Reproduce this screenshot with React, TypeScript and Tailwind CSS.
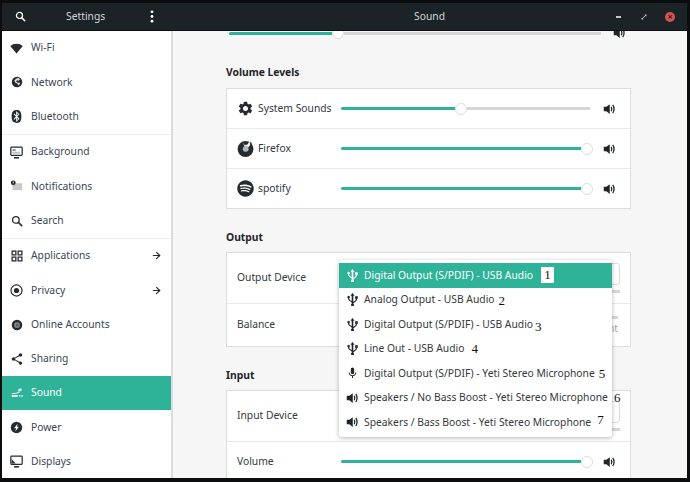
import { ArrowRight } from 'lucide-react';
import { FaBluetooth, FaSpotify } from 'react-icons/fa';
import { MdMic, MdSettings, MdShare } from 'react-icons/md';

type IconProps = { className?: string };

const SearchIcon = ({ className = '' }: IconProps) => (
  <svg viewBox="0 0 16 16" className={className} fill="none" stroke="currentColor" strokeWidth="1.8">
    <circle cx="6.5" cy="6.5" r="4.4" />
    <path d="M10 10l4.2 4.2" strokeWidth="2.2" strokeLinecap="round" />
  </svg>
);

const WifiIcon = ({ className = '' }: IconProps) => (
  <svg viewBox="0 0 16 16" className={className} fill="currentColor">
    <path d="M8 14L.5 5.2C2.5 3.2 5 2.2 8 2.2s5.500 1 7.500 3z" />
  </svg>
);

const GlobeIcon = ({ className = '' }: IconProps) => (
  <svg viewBox="0 0 16 16" className={className}>
    <circle cx="8" cy="8" r="7" fill="currentColor" />
    <path d="M7 3.200l3.500-.6 1.500 2-2 1.800-2-.6-1.200 1.500 2.200 1.700 2.500-.2.500 1.800-2.500 2.200-1-2.700-3-1.500-1-2.500z" fill="#fff" opacity=".85" />
  </svg>
);

const MonitorIcon = ({ className = '' }: IconProps) => (
  <svg viewBox="0 0 16 16" className={className} fill="none" stroke="currentColor">
    <rect x="1" y="1.500" width="14" height="10" rx="1" strokeWidth="1.500" />
    <path d="M5 14.500h6" strokeWidth="2" />
    <path d="M3 4h4v2H3z" fill="currentColor" stroke="none" opacity=".6" />
    <path d="M3 7h9v2.500H3z" fill="currentColor" stroke="none" opacity=".3" />
  </svg>
);

const DisplayIcon = ({ className = '' }: IconProps) => (
  <svg viewBox="0 0 16 16" className={className} fill="none" stroke="currentColor">
    <rect x="1" y="1.500" width="14" height="10" rx="1" strokeWidth="1.500" />
    <path d="M5 14.500h6" strokeWidth="2" />
    <path d="M2 5l5 5.500H2z" fill="currentColor" stroke="none" />
  </svg>
);

const NotificationIcon = ({ className = '' }: IconProps) => (
  <svg viewBox="0 0 16 16" className={className}>
    <path d="M3 4h12v8.500H3z" fill="#c9c9c9" />
    <circle cx="4" cy="3.500" r="3" fill="currentColor" />
    <path d="M4 1.800v2M4 4.600v.6" stroke="#fff" strokeWidth="1" />
  </svg>
);

const AppsIcon = ({ className = '' }: IconProps) => (
  <svg viewBox="0 0 16 16" className={className} fill="none" stroke="currentColor" strokeWidth="1.700">
    <rect x="1.500" y="1.500" width="5" height="5" />
    <rect x="9.500" y="1.500" width="5" height="5" />
    <rect x="1.500" y="9.500" width="5" height="5" />
    <rect x="9.500" y="9.500" width="5" height="5" />
  </svg>
);

const PrivacyIcon = ({ className = '' }: IconProps) => (
  <svg viewBox="0 0 16 16" className={className}>
    <circle cx="8" cy="8" r="6.800" fill="none" stroke="currentColor" strokeWidth="1.500" />
    <circle cx="8" cy="8" r="3.200" fill="currentColor" />
  </svg>
);

const AccountsIcon = ({ className = '' }: IconProps) => (
  <svg viewBox="0 0 16 16" className={className}>
    <circle cx="8" cy="8" r="7" fill="currentColor" />
    <circle cx="8" cy="8" r="3.800" fill="#8b8f92" />
    <circle cx="8" cy="8" r="2" fill="currentColor" opacity=".5" />
  </svg>
);

const SoundSlidersIcon = ({ className = '' }: IconProps) => (
  <svg viewBox="0 0 16 16" className={className} fill="currentColor">
    <path d="M1 8.500L10 7V2.500l4-.5v3l-3 .5v2.500L1 9.500z" />
    <path d="M1 10.500h8V13H1zM11 10.500h1.500V13H11zM14 10.500h1.500V13H14z" />
  </svg>
);

const PowerIcon = ({ className = '' }: IconProps) => (
  <svg viewBox="0 0 16 16" className={className}>
    <circle cx="8" cy="8" r="7" fill="currentColor" />
    <path d="M9.500 3L5 9h2.500L6.500 13 11 7H8.500z" fill="#fff" />
  </svg>
);

const SpeakerIcon = ({ className = '' }: IconProps) => (
  <svg viewBox="0 0 16 16" className={className}>
    <path d="M1 5h3.500L9 1.500v13L4.500 11H1z" fill="currentColor" />
    <path d="M11 5c1 1.800 1 4.200 0 6M13 2.500c2.300 3 2.300 8 0 11" fill="none" stroke="currentColor" strokeWidth="1.700" />
  </svg>
);

const FirefoxIcon = ({ className = '' }: IconProps) => (
  <svg viewBox="0 0 16 16" className={className}>
    <circle cx="8" cy="8.500" r="7.500" fill="currentColor" />
    <path d="M4.500 1.500l2.500 3.200 3-.4 1.500-3 1.300 3-1.800 2.200-3.500-.2z" fill="#f6f6f6" />
    <path d="M13 1l1.200 3.500-2.200 1.500z" fill="currentColor" />
    <path d="M7 5.500c2.200-.6 4 .8 4 2.800S9.300 11.500 7.500 11 5 9 5.500 7.500z" fill="#b4b6b7" />
  </svg>
);

const UsbIcon = ({ className = '' }: IconProps) => (
  <svg viewBox="0 0 16 16" className={className} fill="currentColor">
    <path d="M8 0l2.500 3.500H9V11l2.300-1.800c.5-.4.7-.8.7-1.300V7h-.8V4h3.300v3H13.500v.9c0 1-.5 1.800-1.300 2.400L9 12.800v.4a1.800 1.800 0 1 1-2 0v-1.400L3.800 9.300C3 8.700 2.500 8 2.500 7V6.300a1.500 1.500 0 1 1 1.500 0V7c0 .5.200.900.700 1.300L7 10V3.500H5.500z" />
  </svg>
);

const DotsIcon = ({ className = '' }: IconProps) => (
  <svg viewBox="0 0 4 14" className={className} fill="currentColor">
    <circle cx="2" cy="2" r="1.500" />
    <circle cx="2" cy="7" r="1.500" />
    <circle cx="2" cy="12" r="1.500" />
  </svg>
);

const MaximizeIcon = ({ className = '' }: IconProps) => (
  <svg viewBox="0 0 16 16" className={className} fill="currentColor">
    <path d="M9 3h4v4l-1.400-1.400-6 6L7 13H3V9l1.400 1.400 6-6z" />
  </svg>
);

const navGroups = [
  [
    { label: 'Wi-Fi', icon: <WifiIcon className="w-[13px] h-[13px]" /> },
    { label: 'Network', icon: <GlobeIcon className="w-[12px] h-[12px]" /> },
    { label: 'Bluetooth', icon: <FaBluetooth className="w-[13px] h-[13px]" /> },
  ],
  [
    { label: 'Background', icon: <MonitorIcon className="w-[13px] h-[13px]" /> },
    { label: 'Notifications', icon: <NotificationIcon className="w-[13px] h-[13px]" /> },
    { label: 'Search', icon: <SearchIcon className="w-[12px] h-[12px]" /> },
  ],
  [
    { label: 'Applications', icon: <AppsIcon className="w-[12px] h-[12px]" />, arrow: true },
    { label: 'Privacy', icon: <PrivacyIcon className="w-[13px] h-[13px]" />, arrow: true },
    { label: 'Online Accounts', icon: <AccountsIcon className="w-[12px] h-[12px]" /> },
    { label: 'Sharing', icon: <MdShare className="w-[14px] h-[14px]" /> },
    { label: 'Sound', icon: <SoundSlidersIcon className="w-[12px] h-[12px]" />, active: true },
    { label: 'Power', icon: <PowerIcon className="w-[13px] h-[13px]" /> },
    { label: 'Displays', icon: <DisplayIcon className="w-[13px] h-[13px]" /> },
  ],
];

const Slider = ({ fill, width }: { fill: number; width: number }) => (
  <div className="flex items-center shrink-0" style={{ width }}>
    <div className="h-[3px] shrink-0 rounded-l-full bg-[#2eb398]" style={{ width: fill }} />
    <div className="w-[12px] h-[12px] rounded-full bg-white border border-[#dcdcdc] shrink-0" />
    <div className="flex-1 h-[3px] bg-[#d6d6d6] mr-[3px]" />
  </div>
);

const VolumeRow = ({ icon, label, fill, divider }: { icon?: React.ReactNode; label: string; fill: number; divider?: boolean }) => (
  <div className={`flex items-center h-[39px] pl-[10px] ${divider ? 'border-t border-[#e8e8e8] h-[40px]' : ''}`}>
    <div className="flex items-center w-[104px] shrink-0 gap-[4px]">
      {icon}
      <span>{label}</span>
    </div>
    <Slider fill={fill} width={252} />
    <SpeakerIcon className="w-[12px] h-[12px] ml-[10px] text-[#1f2529]" />
  </div>
);

const Heading = ({ children, className = '' }: { children: string; className?: string }) => (
  <h2 className={`h-[16px] leading-[16px] font-bold text-[#1f2529] ${className}`}>{children}</h2>
);

const ComboRow = ({ label }: { label: string }) => (
  <div className="flex h-[50px] pl-[10px] pr-[10px]">
    <div className="w-[102px] shrink-0 self-center">{label}</div>
    <div className="flex-1 pt-[10px]">
      <div className="h-[22px] rounded-[3px] border border-[#dcdcdc] bg-white" />
      <div className="h-[3px] mt-[5px] bg-[#d6d6d6]" />
    </div>
  </div>
);

const devices = [
  { icon: 'usb', text: 'Digital Output (S/PDIF) - USB Audio', mark: '1', markClass: 'ml-[8px] w-[13px] h-[16px] bg-white text-center leading-[16px]', selected: true },
  { icon: 'usb', text: 'Analog Output - USB Audio', mark: '2', markClass: 'ml-[4px] top-[1px]' },
  { icon: 'usb', text: 'Digital Output (S/PDIF) - USB Audio', mark: '3', markClass: 'ml-[2px] top-[2px]' },
  { icon: 'usb', text: 'Line Out - USB Audio', mark: '4', markClass: 'ml-[7px]' },
  { icon: 'mic', text: 'Digital Output (S/PDIF) - Yeti Stereo Microphone', mark: '5', markClass: 'ml-[4px]' },
  { icon: 'speaker', text: 'Speakers / No Bass Boost - Yeti Stereo Microphone', mark: '6', markClass: 'ml-[6px]' },
  { icon: 'speaker', text: 'Speakers / Bass Boost - Yeti Stereo Microphone', mark: '7', markClass: 'ml-[6px] -top-[3px]' },
];

const DeviceMenu = () => (
  <div className="absolute left-[337px] top-[229px] w-[273px] h-[177px] pt-[3px] bg-white rounded-[3px] shadow-[0_1px_4px_rgba(0,0,0,0.3)]">
    {devices.map((d) => (
      <div
        key={d.mark}
        className={`flex items-center h-[24.500px] pl-[7px] whitespace-nowrap ${d.selected ? 'bg-[#2eb398] text-white' : 'text-[#33393d]'}`}
      >
        {d.icon === 'usb' && <UsbIcon className={`w-[13px] h-[13px] shrink-0 ${d.selected ? 'text-white' : 'text-[#1f2529]'}`} />}
        {d.icon === 'mic' && <MdMic className="w-[13px] h-[14px] shrink-0 text-[#1f2529]" />}
        {d.icon === 'speaker' && <SpeakerIcon className="w-[12px] h-[12px] mr-[1px] shrink-0 text-[#1f2529]" />}
        <span className="ml-[5px]">{d.text}</span>
        <span className={`relative text-[#111] font-['Liberation_Serif',serif] text-[13px] ${d.markClass}`}>{d.mark}</span>
      </div>
    ))}
  </div>
);

export default function App() {
  return (
    <div className="w-[690px] h-[482px] bg-[#0c0d0e] pt-[3px] pl-[2px] pr-[3px] pb-[4px] flex flex-col overflow-hidden font-['Noto_Sans',sans-serif] text-[10.300px] text-[#33393d]">
      <header className="flex items-center h-[27px] shrink-0 bg-[#1c2326] text-[#d0d6d8]">
        <div className="flex items-center w-[170px] shrink-0">
          <SearchIcon className="w-[11px] h-[11px] ml-[13px] text-white" />
          <span className="ml-[40px] w-[44px]">Settings</span>
          <DotsIcon className="w-[4px] h-[13px] ml-[40px] text-white" />
        </div>
        <div className="flex-1 pl-[85px] text-center">Sound</div>
        <div className="flex items-center w-[85px] shrink-0 pl-[10px] gap-[13px]">
          <div className="w-[12px] flex justify-center">
            <div className="w-[5px] h-[2px] bg-[#c8c8c8]" />
          </div>
          <MaximizeIcon className="w-[8px] h-[8px] ml-[3px] text-[#c8c8c8]" />
          <div className="w-[10px] h-[10px] ml-[4px] rounded-full bg-[#d9534f] flex items-center justify-center text-[#1c2326] text-[9px] leading-none font-bold">×</div>
        </div>
      </header>

      <div className="relative flex flex-1 min-h-0 mt-[1px] overflow-hidden">
        <nav className="w-[171px] shrink-0 bg-white border-r-2 border-[#dcdcdc] text-[#3a4653]">
          {navGroups.map((group, i) => (
            <div key={i} className={i > 0 ? 'border-t border-[#ececec]' : ''}>
              {group.map((item) => (
                <div
                  key={item.label}
                  className={`flex items-center h-[34.300px] pr-[9px] ${item.active ? 'bg-[#2eb398] text-white' : ''}`}
                >
                  <div className={`flex justify-center w-[29px] shrink-0 ${item.active ? 'text-white' : 'text-[#252b2f]'}`}>{item.icon}</div>
                  <span className="flex-1">{item.label}</span>
                  {item.arrow && <ArrowRight className="w-[11px] h-[11px] text-[#252b2f]" strokeWidth={2.5} />}
                </div>
              ))}
            </div>
          ))}
        </nav>

        <main className="flex-1 bg-[#f6f6f6] overflow-hidden pl-[53px]">
          <div className="w-[405px]">
            <div className="flex items-center h-[12px] -mt-[4px] pl-[3px]">
              <Slider fill={103} width={375} />
              <SpeakerIcon className="w-[12px] h-[12px] ml-[9px] text-[#1f2529]" />
            </div>

            <Heading className="mt-[25px] mb-[8px]">Volume Levels</Heading>
            <div className="bg-white border border-[#dcdcdc]">
              <VolumeRow icon={<MdSettings className="w-[17px] h-[17px] text-[#252b2f]" />} label="System Sounds" fill={114} />
              <VolumeRow icon={<FirefoxIcon className="w-[17px] h-[17px] text-[#252b2f]" />} label="Firefox" fill={240} divider />
              <VolumeRow icon={<FaSpotify className="w-[17px] h-[17px] text-[#252b2f]" />} label="spotify" fill={240} divider />
            </div>

            <Heading className="mt-[20px] mb-[7px]">Output</Heading>
            <div className="bg-white border border-[#dcdcdc]">
              <ComboRow label="Output Device" />
              <div className="flex h-[43px] border-t border-[#e8e8e8] pl-[10px] pr-[12px]">
                <div className="w-[102px] shrink-0 self-center">Balance</div>
                <div className="flex-1 pt-[12px]">
                  <div className="h-[3px] bg-[#d6d6d6]" />
                  <div className="mt-[2px] text-right text-[#a8a8a8]">Right</div>
                </div>
              </div>
            </div>

            <Heading className="mt-[20px] mb-[7px]">Input</Heading>
            <div className="bg-white border border-[#dcdcdc]">
              <ComboRow label="Input Device" />
              <VolumeRow label="Volume" fill={240} divider />
            </div>
          </div>
        </main>

        <DeviceMenu />
      </div>
    </div>
  );
}
